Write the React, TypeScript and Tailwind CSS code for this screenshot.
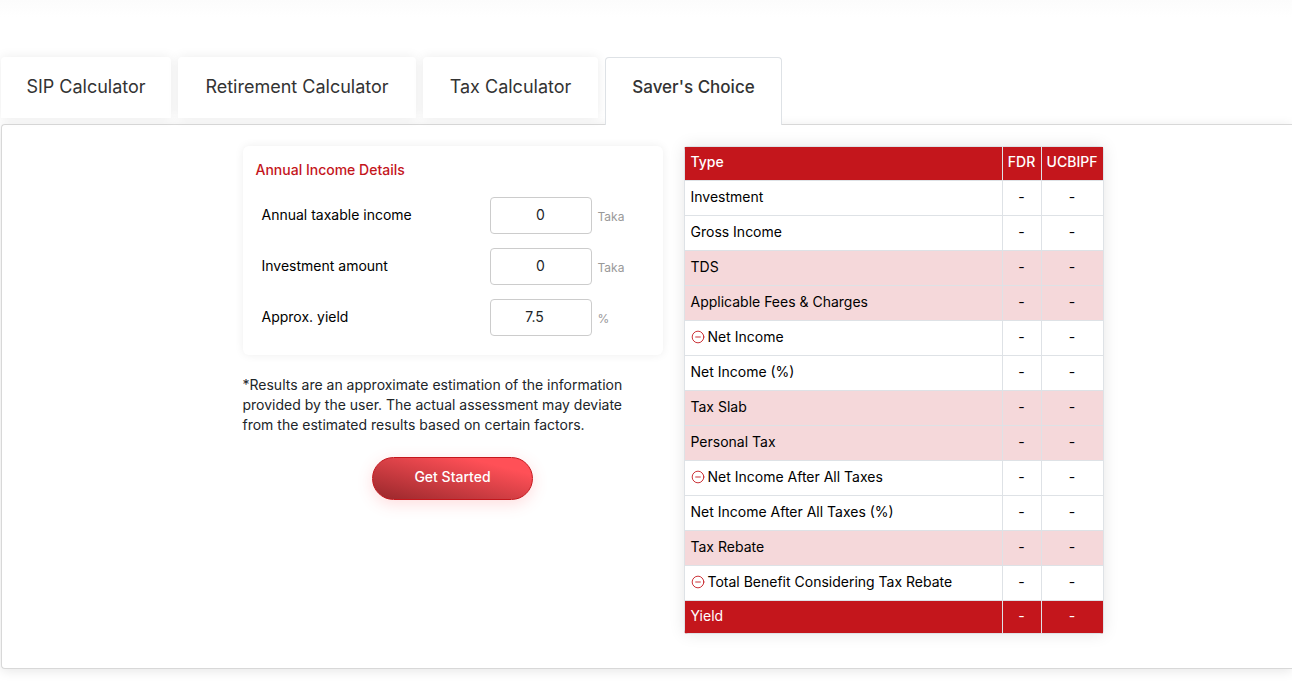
import { CircleMinus } from "lucide-react";

const tabs = [
  { name: "SIP Calculator", width: "w-[170px]" },
  { name: "Retirement Calculator", width: "w-[238px]" },
  { name: "Tax Calculator", width: "w-[175px]" },
];

const fields = [
  { id: "income", label: "Annual taxable income", value: "0", unit: "Taka", pad: "px-3" },
  { id: "investment", label: "Investment amount", value: "0", unit: "Taka", pad: "px-3" },
  { id: "yield", label: "Approx. yield", value: "7.5", unit: "%", pad: "pl-3 pr-6" },
];

const rows = [
  { label: "Investment" },
  { label: "Gross Income" },
  { label: "TDS", tinted: true },
  { label: "Applicable Fees & Charges", tinted: true },
  { label: "Net Income", toggle: true },
  { label: "Net Income (%)" },
  { label: "Tax Slab", tinted: true },
  { label: "Personal Tax", tinted: true },
  { label: "Net Income After All Taxes", toggle: true },
  { label: "Net Income After All Taxes (%)" },
  { label: "Tax Rebate", tinted: true },
  { label: "Total Benefit Considering Tax Rebate", toggle: true },
];

function Tabs() {
  return (
    <div role="tablist" className="flex items-start gap-[7px] pl-px">
      {tabs.map((tab) => (
        <button
          key={tab.name}
          role="tab"
          aria-selected={false}
          className={`${tab.width} h-[61px] shrink-0 rounded-t bg-white pb-[2px] text-lg leading-6 whitespace-nowrap text-[#333] shadow-[0_0_12px_rgba(0,0,0,0.08)]`}
        >
          {tab.name}
        </button>
      ))}
      <button
        role="tab"
        aria-selected={true}
        className="relative z-10 -mb-px h-[68px] w-[177px] shrink-0 rounded-t border border-b-0 border-[#dee2e6] bg-white pb-[9px] text-[17px] leading-6 font-medium whitespace-nowrap text-[#333]"
      >
        Saver's Choice
      </button>
    </div>
  );
}

function IncomeCard() {
  return (
    <div className="h-[209px] rounded-md bg-white px-[13px] pt-[14px] shadow-[0_0_10px_rgba(0,0,0,0.07)]">
      <h2 className="text-sm leading-5 font-medium text-[#c4161c]">Annual Income Details</h2>
      <div className="mt-[17px] flex flex-col gap-[14px] pl-[6px]">
        {fields.map((field) => (
          <div key={field.id} className="flex items-center">
            <label htmlFor={field.id} className="w-[228px] pb-[2px] text-sm text-black">
              {field.label}
            </label>
            <input
              id={field.id}
              type="text"
              inputMode="decimal"
              defaultValue={field.value}
              className={`${field.pad} h-[37px] w-[102px] rounded border border-[#ccc] bg-white pb-[2px] text-center text-sm text-[#212529] outline-none`}
            />
            <span className="pt-[2px] pl-[6px] text-xs text-[#999]">{field.unit}</span>
          </div>
        ))}
      </div>
    </div>
  );
}

function ResultTable() {
  return (
    <div className="w-[420px] overflow-hidden rounded shadow-[0_0_16px_rgba(0,0,0,0.1)]">
      <table className="w-full table-fixed border-collapse border border-[#dee2e6] text-sm leading-5 text-black">
        <colgroup>
          <col className="w-[318px]" />
          <col className="w-[39px]" />
          <col />
        </colgroup>
        <thead>
          <tr className="h-[34px] bg-[#c4161c] text-white">
            <th className="border border-[#dee2e6] pb-[3px] pl-[6px] text-left font-medium">Type</th>
            <th className="border border-[#dee2e6] pb-[3px] text-center font-medium">FDR</th>
            <th className="border border-[#dee2e6] pb-[3px] text-center font-medium">UCBIPF</th>
          </tr>
        </thead>
        <tbody>
          {rows.map((row) => (
            <tr key={row.label} className={row.tinted ? "h-[35px] bg-[#f5d8da]" : "h-[35px] bg-white"}>
              <td className="border border-[#dee2e6] pb-[3px] pl-[6px]">
                <span className="flex items-center gap-[3px]">
                  {row.toggle && (
                    <CircleMinus size={14} strokeWidth={1.5} className="shrink-0 text-[#c4161c]" />
                  )}
                  {row.label}
                </span>
              </td>
              <td className="border border-[#dee2e6] pb-[3px] text-center">-</td>
              <td className="border border-[#dee2e6] pb-[3px] text-center">-</td>
            </tr>
          ))}
        </tbody>
        <tfoot>
          <tr className="h-[33px] bg-[#c4161c] text-white">
            <td className="border border-[#dee2e6] pb-[3px] pl-[6px]">Yield</td>
            <td className="border border-[#dee2e6] pb-[3px] text-center">-</td>
            <td className="border border-[#dee2e6] pb-[3px] text-center">-</td>
          </tr>
        </tfoot>
      </table>
    </div>
  );
}

export default function App() {
  return (
    <main className="overflow-hidden bg-white pb-6 font-['Inter','Noto_Sans',sans-serif]">
      <div className="h-[57px] bg-linear-to-b from-[#fcfcfc] to-white to-30%" />
      <Tabs />
      <section className="ml-px flex justify-center gap-[21px] rounded-l border border-r-0 border-[#d8d8d8] bg-white pt-[21px] pb-[34px] pl-[52px] shadow-[0_2px_12px_rgba(0,0,0,0.1)]">
        <div className="w-[420px]">
          <IncomeCard />
          <p className="mt-5 pr-5 text-sm leading-5 text-[#212529]">
            *Results are an approximate estimation of the information provided by the user. The
            actual assessment may deviate from the estimated results based on certain factors.
          </p>
          <div className="mt-[22px] flex justify-center">
            <button className="h-[43px] w-[161px] rounded-full border border-[#c4161c] bg-[linear-gradient(to_top_right,#98272b,#ff5057_80%)] pb-[3px] text-sm font-medium text-white shadow-[0_4px_16px_rgba(255,80,87,0.2)]">
              Get Started
            </button>
          </div>
        </div>
        <ResultTable />
      </section>
    </main>
  );
}
